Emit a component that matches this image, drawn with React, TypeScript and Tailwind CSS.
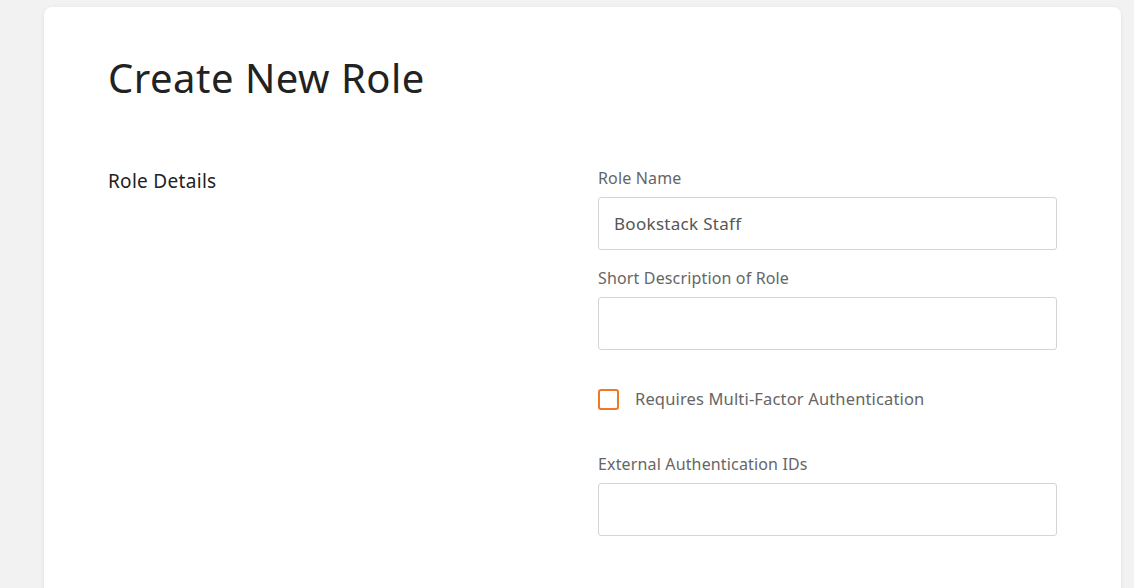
import React from "react";

const font = { fontFamily: '"Noto Sans", "Open Sans", sans-serif' };

function Field({ label, value }: { label: string; value?: string }) {
  return (
    <div className="flex flex-col">
      <label className="text-[16px] leading-[20px] tracking-[0.15px] text-[#666] mb-[9px]">{label}</label>
      <div className="h-[53px] rounded-[3px] border border-[#d4d4d4] bg-white flex items-center px-[15px] text-[17px] tracking-[0.3px] text-[#555]">
        {value}
      </div>
    </div>
  );
}

export default function App() {
  return (
    <div className="min-h-[588px] bg-[#f2f2f2] pl-[44px] pr-[13px] pt-[7px]" style={font}>
      <div className="bg-white rounded-[8px] shadow-[0_1px_4px_rgba(0,0,0,0.08)] min-h-[600px] px-[64px] pt-[43px]">
        <h1 className="text-[40px] leading-[56px] tracking-[0.5px] text-[#222] font-normal">Create New Role</h1>
        <div className="grid grid-cols-2 gap-[31px] mt-[62px]">
          <div className="text-[19px] leading-[24px] tracking-[0.3px] text-[#222] pt-[1px]">Role Details</div>
          <div className="flex flex-col">
            <Field label="Role Name" value="Bookstack Staff" />
            <div className="mt-[18px]">
              <Field label="Short Description of Role" />
            </div>
            <div className="flex items-center mt-[37px]">
              <span className="w-[21px] h-[21px] rounded-[3px] border-2 border-[#f0782d] bg-white" />
              <span className="ml-[16px] text-[16.5px] tracking-[0.15px] text-[#666]">Requires Multi-Factor Authentication</span>
            </div>
            <div className="mt-[42px]">
              <Field label="External Authentication IDs" />
            </div>
          </div>
        </div>
      </div>
    </div>
  );
}
